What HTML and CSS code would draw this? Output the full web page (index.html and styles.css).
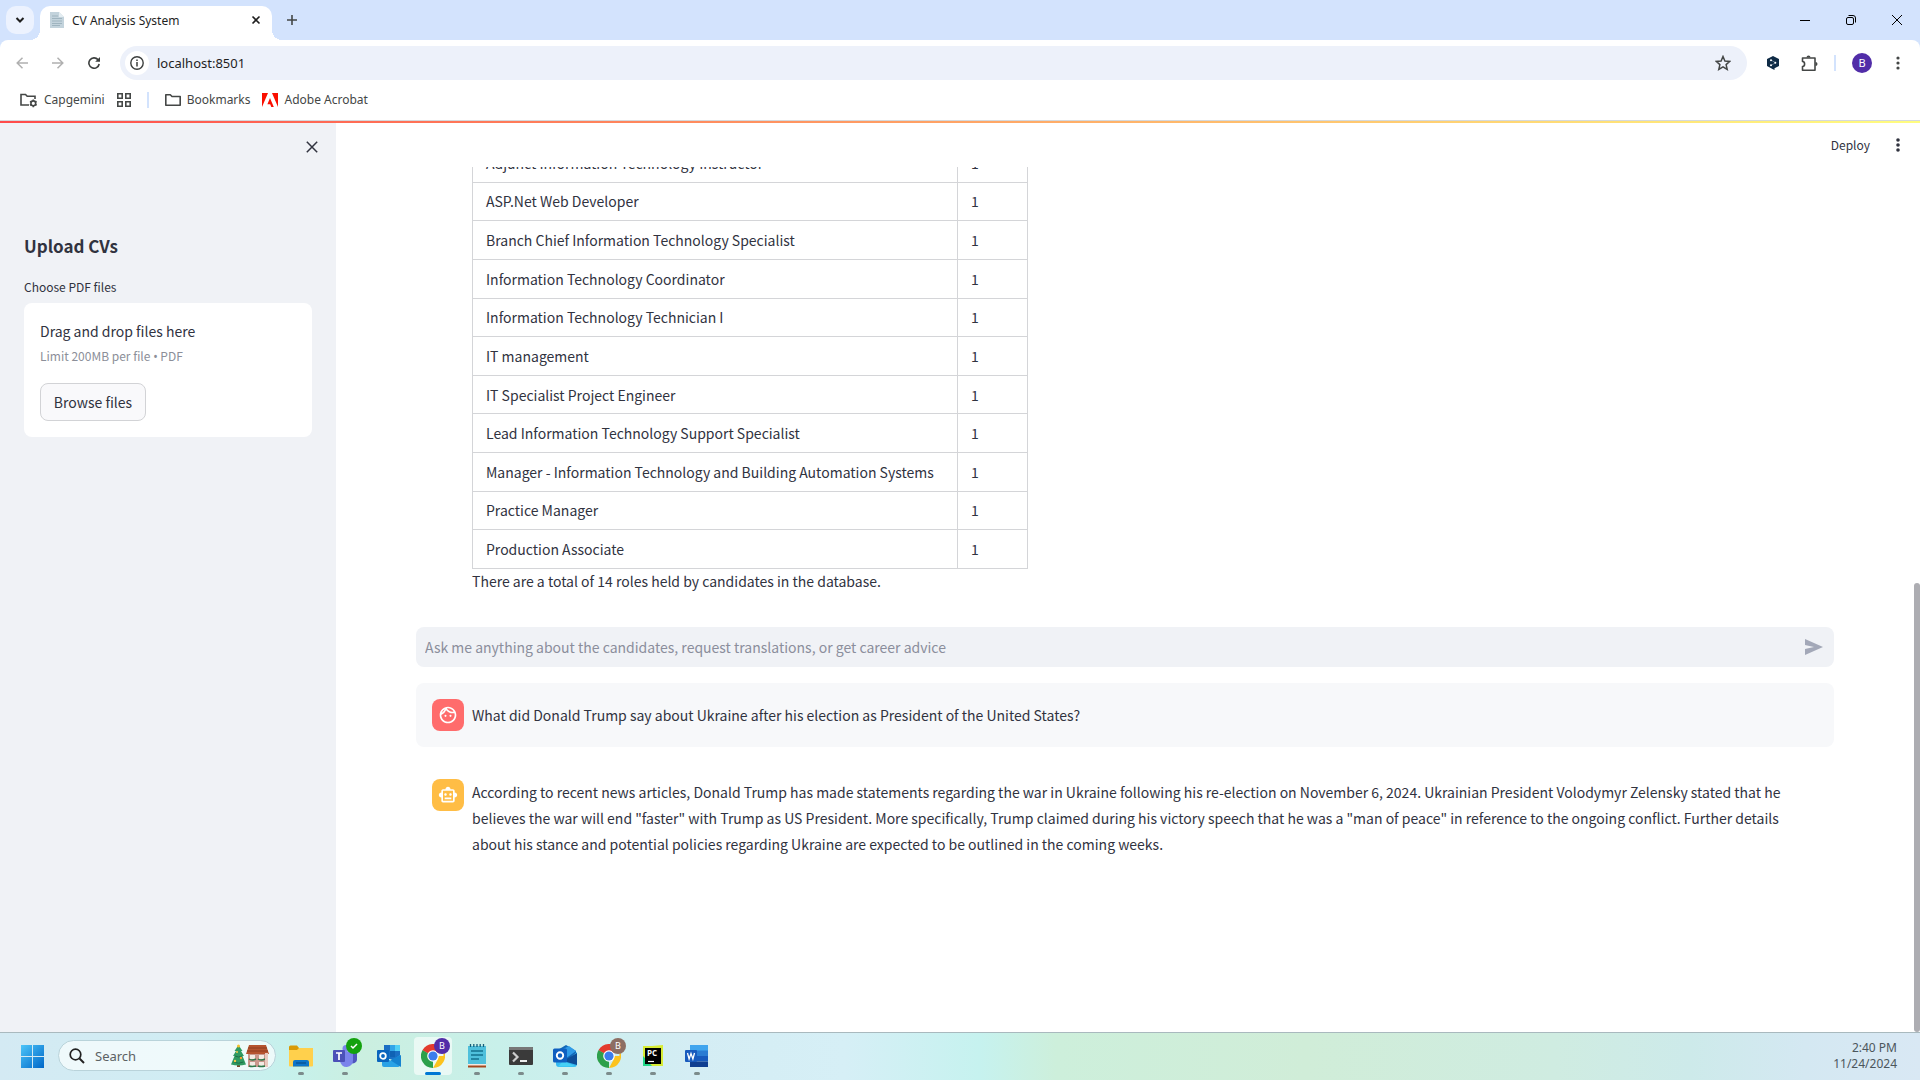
FILE: index.html
```html
<!DOCTYPE html>
<html lang="en">
<head>
<meta charset="utf-8">
<title>CV Analysis System</title>
<link rel="stylesheet" href="styles.css">
</head>
<body>
<header class="browser">
  <div class="tabstrip">
    <button class="tab-search" aria-label="Search tabs"><svg width="10" height="10" viewBox="0 0 10 10"><path d="M1.500 3l3.500 3.500L8.500 3" fill="none" stroke="#1f1f1f" stroke-width="2"/></svg></button>
    <div class="tab">
      <svg width="14" height="16" viewBox="0 0 14 16"><path d="M0 0h9l5 5v11H0z" fill="#c3d3dc"/><path d="M9 0l5 5H9z" fill="#e4edf2"/><path d="M2 4h6M2 6.500h10M2 9h10M2 11.500h10M2 13.500h8" stroke="#9fb4bf"/></svg>
      <span class="tab-title">CV Analysis System</span>
      <button class="plain" aria-label="Close tab"><svg width="10" height="10" viewBox="0 0 10 10"><path d="M1.500 1.500l7 7m0-7l-7 7" stroke="#1f1f1f" stroke-width="1.600"/></svg></button>
    </div>
    <button class="plain new-tab" aria-label="New tab"><svg width="12" height="12" viewBox="0 0 12 12"><path d="M6 1v10M1 6h10" stroke="#444746" stroke-width="1.600"/></svg></button>
    <div class="window-buttons">
      <button class="plain" aria-label="Minimize"><svg width="10" height="10" viewBox="0 0 10 10"><path d="M0 5.500h10" stroke="#000"/></svg></button>
      <button class="plain" aria-label="Restore"><svg width="10" height="10" viewBox="0 0 10 10"><rect x=".5" y="2.500" width="7" height="7" rx="1.500" fill="none" stroke="#000"/><path d="M2.500.5H7q2.500 0 2.500 2.500v4.500" fill="none" stroke="#000"/></svg></button>
      <button class="plain" aria-label="Close"><svg width="10" height="10" viewBox="0 0 10 10"><path d="M0 0l10 10M10 0L0 10" stroke="#000"/></svg></button>
    </div>
  </div>
  <div class="toolbar">
    <button class="plain" aria-label="Back"><svg width="12" height="12" viewBox="0 0 12 12"><path d="M12 6H1M6.500.8L1.200 6l5.300 5.200" fill="none" stroke="#b0b0b0" stroke-width="1.500"/></svg></button>
    <button class="plain" aria-label="Forward"><svg width="12" height="12" viewBox="0 0 12 12"><path d="M0 6h11M5.500.8L10.800 6l-5.300 5.200" fill="none" stroke="#b0b0b0" stroke-width="1.500"/></svg></button>
    <button class="plain" aria-label="Reload"><svg width="12" height="12" viewBox="0 0 12 12"><path d="M11.200 7A5.200 5.200 0 1 1 10 2.600L11 3.800" fill="none" stroke="#3c3f3e" stroke-width="1.600"/><path d="M12 0v4.800H7.200z" fill="#3c3f3e"/></svg></button>
    <div class="omnibox">
      <button class="site-info" aria-label="Site information"><svg width="14" height="14" viewBox="0 0 14 14"><circle cx="7" cy="7" r="6.200" fill="none" stroke="#3c3f3e" stroke-width="1.400"/><path d="M7 6v4.500M7 3.500V5" stroke="#3c3f3e" stroke-width="1.500"/></svg></button>
      <input class="url" aria-label="Address" value="localhost:8501">
      <button class="plain" aria-label="Bookmark this page"><svg width="16" height="16" viewBox="0 0 16 16"><path d="M8 1.500l1.900 4.500 4.900.4-3.700 3.200 1.100 4.800L8 11.800l-4.200 2.600 1.100-4.800L1.200 6.400 6.100 6z" fill="none" stroke="#444746" stroke-width="1.500"/></svg></button>
    </div>
    <div class="extensions">
      <button class="plain extension" aria-label="Extension"><svg width="12" height="14" viewBox="0 0 12 14"><path d="M6 0l6 3v7l-4.500 2.300V14L5.500 13 0 10V3z" fill="#0f2b46"/><path d="M4 4l4.500 2.700L4 9.500" fill="none" stroke="#8fa4b8" stroke-width=".6"/><circle cx="4" cy="4.200" r="1" fill="#fff"/><circle cx="8.300" cy="6.700" r="1" fill="#fff"/><circle cx="4" cy="9.300" r="1" fill="#fff"/></svg></button>
      <button class="plain" aria-label="Extensions"><svg width="17" height="17" viewBox="0 0 17 17"><path d="M1.500 3H14v12.200H1.500V11.500c2.800 0 2.800-5 0-5z" fill="none" stroke="#444746" stroke-width="1.600" stroke-linejoin="round"/><path d="M5.500 2.500a2 2 0 0 1 4 0zM14.500 7a2 2 0 0 1 0 4z" fill="#444746"/></svg></button>
      <span class="divider"></span>
      <button class="profile" aria-label="Profile">B</button>
    </div>
    <button class="plain" aria-label="Browser menu"><svg width="4" height="14" viewBox="0 0 4 14" fill="#444746"><circle cx="2" cy="2" r="1.600"/><circle cx="2" cy="7" r="1.600"/><circle cx="2" cy="12" r="1.600"/></svg></button>
  </div>
  <nav class="bookmarks">
    <a href="#"><svg width="18" height="15" viewBox="0 0 18 15" fill="none" stroke="#444746" stroke-width="1.600"><path d="M9 12H1V1.500h4.500L7.200 3.300H15V6"/><circle cx="13.300" cy="10.300" r="2.400"/><path d="M13.300 6.500v1.300M13.300 12.800v1.400M10 8.400l1.200.7M15.400 11.500l1.200.7M10 12.200l1.200-.7M15.400 9.100l1.200-.7"/></svg>Capgemini</a>
    <button class="plain" aria-label="Tab groups"><svg width="14" height="14" viewBox="0 0 14 14" fill="none" stroke="#444746" stroke-width="1.600"><path d="M.8.8h4.400v4.400H.8zM8.800.8h4.400v4.400H8.800zM.8 8.800h4.400v4.400H.8zM8.800 8.800h4.400v4.400H8.800z"/></svg></button>
    <span class="divider"></span>
    <a href="#"><svg width="16" height="12" viewBox="0 0 16 12" fill="none" stroke="#444746" stroke-width="1.600"><path d="M.8.8h4.500l1.700 1.700h8.200v8.700H.8z" stroke-linejoin="round"/></svg>Bookmarks</a>
    <a href="#"><svg width="16" height="14" viewBox="0 0 16 14" fill="#fa0f00"><path d="M0 0h6L0 14zM16 0h-6l6 14zM8 5l3.800 9H9.300l-1.100-2.800H5.400z"/></svg>Adobe Acrobat</a>
  </nav>
</header>

<div class="app">
  <div class="rainbow"></div>
  <aside class="sidebar">
    <button class="plain close-sidebar" aria-label="Close sidebar"><svg width="12" height="12" viewBox="0 0 12 12"><path d="M.8.8l10.400 10.400M11.200.8L.8 11.200" stroke="#31333f" stroke-width="1.500"/></svg></button>
    <h2>Upload CVs</h2>
    <p class="upload-label" id="upload-label">Choose PDF files</p>
    <section class="dropzone" aria-labelledby="upload-label">
      <p class="drop-title">Drag and drop files here</p>
      <p class="drop-limit">Limit 200MB per file <span class="dot">•</span> PDF</p>
      <button class="browse">Browse files</button>
    </section>
  </aside>
  <main class="main">
    <div class="app-header">
      <button class="plain deploy">Deploy</button>
      <button class="plain" aria-label="App menu"><svg width="4" height="14" viewBox="0 0 4 14" fill="#31333f"><circle cx="2" cy="2" r="1.800"/><circle cx="2" cy="7" r="1.800"/><circle cx="2" cy="12" r="1.800"/></svg></button>
    </div>
    <div class="content">
      <div class="answer">
        <table class="roles">
          <tbody>
            <tr><td>Adjunct Information Technology Instructor</td><td>1</td></tr>
            <tr><td>ASP.Net Web Developer</td><td>1</td></tr>
            <tr><td>Branch Chief Information Technology Specialist</td><td>1</td></tr>
            <tr><td>Information Technology Coordinator</td><td>1</td></tr>
            <tr><td>Information Technology Technician I</td><td>1</td></tr>
            <tr><td>IT management</td><td>1</td></tr>
            <tr><td>IT Specialist Project Engineer</td><td>1</td></tr>
            <tr><td>Lead Information Technology Support Specialist</td><td>1</td></tr>
            <tr><td>Manager - Information Technology and Building Automation Systems</td><td>1</td></tr>
            <tr><td>Practice Manager</td><td>1</td></tr>
            <tr><td>Production Associate</td><td>1</td></tr>
          </tbody>
        </table>
        <p>There are a total of 14 roles held by candidates in the database.</p>
      </div>
      <form class="chat-input">
        <input aria-label="Chat message" placeholder="Ask me anything about the candidates, request translations, or get career advice">
        <button type="button" class="plain" aria-label="Send"><svg width="18" height="16" viewBox="0 0 18 16"><path d="M0 0l18 8L0 16V10l9-2-9-2z" fill="#a3a8b8"/></svg></button>
      </form>
      <article class="message user">
        <span class="avatar face"><svg width="20" height="20" viewBox="0 0 24 24" fill="#fff"><path d="M10.250 13a1.250 1.250 0 1 1-2.500 0 1.250 1.250 0 0 1 2.500 0zM15 11.750a1.250 1.250 0 1 0 0 2.500 1.250 1.250 0 0 0 0-2.500zM22 12c0 5.520-4.480 10-10 10S2 17.520 2 12 6.480 2 12 2s10 4.480 10 10zM10.660 4.120C12.060 6.440 14.600 8 17.500 8c.46 0 .91-.05 1.340-.12C17.440 5.560 14.900 4 12 4c-.46 0-.91.050-1.340.120zM4.420 9.470a8.046 8.046 0 0 0 3.660-4.440 8.046 8.046 0 0 0-3.660 4.440zM20 12c0-.78-.12-1.530-.33-2.240-.7.150-1.420.240-2.170.240a9.974 9.974 0 0 1-7.760-3.690A10.016 10.016 0 0 1 4 11.860c.01.040 0 .090 0 .140 0 4.410 3.590 8 8 8s8-3.590 8-8z"/></svg></span>
        <p>What did Donald Trump say about Ukraine after his election as President of the United States?</p>
      </article>
      <article class="message reply">
        <span class="avatar bot"><svg width="20" height="20" viewBox="0 0 24 24" fill="#fff"><path d="M20 9V7c0-1.100-.9-2-2-2h-3c0-1.660-1.340-3-3-3S9 3.340 9 5H6c-1.100 0-2 .9-2 2v2c-1.660 0-3 1.340-3 3s1.340 3 3 3v4c0 1.100.9 2 2 2h12c1.100 0 2-.9 2-2v-4c1.660 0 3-1.340 3-3s-1.340-3-3-3zm-2 10H6V7h12v12zm-9-6c-.83 0-1.500-.67-1.500-1.500S8.170 10 9 10s1.500.67 1.500 1.500S9.830 13 9 13zm7.500-1.500c0 .83-.67 1.500-1.500 1.500s-1.500-.67-1.500-1.500.67-1.500 1.500-1.500 1.500.67 1.500 1.500zM8 15h8v2H8z"/></svg></span>
        <p>According to recent news articles, Donald Trump has made statements regarding the war in Ukraine following his re-election on November 6, 2024. Ukrainian President Volodymyr Zelensky stated that he believes the war will end "faster" with Trump as US President. More specifically, Trump claimed during his victory speech that he was a "man of peace" in reference to the ongoing conflict. Further details about his stance and potential policies regarding Ukraine are expected to be outlined in the coming weeks.</p>
      </article>
    </div>
    <div class="scroll-thumb"></div>
  </main>
</div>

<footer class="taskbar">
  <button class="task start" aria-label="Start"><svg width="24" height="24" viewBox="0 0 24 24"><defs><linearGradient id="win" x1="0" y1="0" x2="24" y2="24" gradientUnits="userSpaceOnUse"><stop stop-color="#4fc9fb"/><stop offset="1" stop-color="#0067c8"/></linearGradient></defs><path d="M1 1h11v11H1zM13 1h11v11H13zM1 13h11v11H1zM13 13h11v11H13z" fill="url(#win)"/></svg></button>
  <label class="search">
    <svg width="16" height="16" viewBox="0 0 16 16"><circle cx="6.500" cy="6.500" r="5.300" fill="none" stroke="#222" stroke-width="1.700"/><path d="M10.500 10.500L15 15" stroke="#222" stroke-width="2"/></svg>
    <input placeholder="Search" aria-label="Search">
    <svg width="38" height="24" viewBox="0 0 38 24"><path d="M6 18h3v5H6z" fill="#7b4a2a"/><path d="M7.500 1l4 6h-1.500l3 5h-1.500l3.500 8.500q-7.500 2-15 0L3.500 12H2l3-5H3.500z" fill="#2f9a62"/><path d="M4 12q3.500 2 7 0M2.500 18q5 2.500 10 0" stroke="#1c7048" fill="none"/><circle cx="7.500" cy="2" r="1.500" fill="#f6c12f"/><circle cx="6" cy="8" r="1" fill="#f7c948"/><circle cx="10" cy="14" r="1.200" fill="#f0a030"/><circle cx="4" cy="17" r="1.200" fill="#f7c948"/><path d="M17 8h19v15H17z" fill="#c9978c"/><path d="M18 1h17l3 9H15z" fill="#b5532f"/><path d="M17 4h19M16 7h21" stroke="#8e3c20"/><path d="M19 11h5v4h-5zM28 11h5v4h-5zM19 18h5v4h-5zM28 18h5v4h-5z" fill="#f2ebe4"/><path d="M18 15q3 2 7 0M27 15q3 2 7 0M18 22q3 1 7 0M27 22q3 1 7 0" stroke="#2c7a4b" stroke-width="1.500" fill="none"/><path d="M34 9h3v14h-3z" fill="#e8c9c0"/></svg>
  </label>
  <button class="task" aria-label="File Explorer"><svg width="24" height="24" viewBox="0 0 24 24"><path d="M0 3q0-1.500 1.500-1.500H8L10 4v4H0z" fill="#d99a05"/><path d="M0 6h8l2-2h14v17.500q0 1-1 1H1q-1 0-1-1z" fill="#ffd04c"/><path d="M4 22.500V18q0-2 2-2h12q2 0 2 2v4.500z" fill="#0f75c8"/><path d="M7 19h10" stroke="#0a4d8c" stroke-width="1.200"/></svg><i></i></button>
  <button class="task" aria-label="Teams"><svg width="24" height="24" viewBox="0 0 24 24"><circle cx="13" cy="4.500" r="3.500" fill="#7b83eb"/><path d="M17 8h7v7a4 4 0 0 1-7 3z" fill="#4f55be"/><path d="M7 8h13v8a6.500 6.500 0 0 1-13 1z" fill="#7b83eb"/><rect y="6" width="12" height="12" rx="1" fill="#4b50b8"/><path d="M3 9h6M6 9v7" stroke="#fff" stroke-width="1.700"/></svg><b class="badge ok"><svg width="8" height="8" viewBox="0 0 8 8"><path d="M1 4l2 2 4-4" fill="none" stroke="#fff" stroke-width="1.500"/></svg></b><i></i></button>
  <button class="task" aria-label="Outlook classic"><svg width="24" height="24" viewBox="0 0 24 24"><path d="M7 1h16v14H7z" fill="#1a6fc4"/><path d="M13 1h5v6h-5z" fill="#31a5e8"/><path d="M18 1h5v6h-5z" fill="#50d0f5"/><path d="M13 7h5v6h-5z" fill="#0f62b4"/><path d="M5 12l9 5 9-6v10q0 2-2 2H7q-2 0-2-2z" fill="#2aa2e6"/><path d="M24 11v12L13 16z" fill="#1683d0"/><rect y="6" width="12" height="12" rx="1" fill="#0a64bd"/><circle cx="6" cy="12" r="2.800" fill="none" stroke="#fff" stroke-width="1.800"/></svg></button>
  <button class="task active" aria-label="Chrome"><svg width="24" height="24" viewBox="0 0 24 24"><path d="M12 12L1.600 6A12 12 0 0 1 22.400 6z" fill="#e33b2e"/><path d="M12 12L1.600 6A12 12 0 0 0 12 24z" fill="#2da04b"/><path d="M12 12h10.400V6A12 12 0 0 1 12 24l5-9z" fill="#fcc31e"/><path d="M1.600 6h20.800L12 12z" fill="#e33b2e"/><circle cx="12" cy="12" r="5.800" fill="#fff"/><circle cx="12" cy="12" r="4.600" fill="#3b7ded"/></svg><b class="badge purple">B</b><i></i></button>
  <button class="task" aria-label="Notepad"><svg width="24" height="24" viewBox="0 0 24 24"><path d="M3 19h18v4.500H3z" fill="#a5481f"/><path d="M3 20h18v1.500H3z" fill="#f4e9e0"/><path d="M3 2h18v18H3z" fill="#4fc0dc"/><path d="M6 7h12M6 11h12M6 15h8" stroke="#14718f" stroke-width="1.400"/><path d="M5.500 0v3M8.800 0v3M12 0v3M15.200 0v3M18.500 0v3" stroke="#155e7a" stroke-width="1.300"/></svg><i></i></button>
  <button class="task" aria-label="Terminal"><svg width="24" height="24" viewBox="0 0 24 24"><rect y="3" width="24" height="18" rx="1" fill="#3a3a3a"/><path d="M0 6V4q0-1 1-1h22q1 0 1 1v2z" fill="#777"/><path d="M4 8.500L8.500 13 4 17.500" fill="none" stroke="#ccc" stroke-width="2.200"/><path d="M11 17h7" stroke="#fff" stroke-width="1.800"/></svg><i></i></button>
  <button class="task" aria-label="Outlook"><svg width="24" height="24" viewBox="0 0 24 24"><path d="M3 7l10-6 10 6v9H3z" fill="#1268b8"/><path d="M8 6l8-4 7 5-11 8z" fill="#2f9be8"/><path d="M3 14l10 3 11-9v12q0 3-3 3H6q-3 0-3-3z" fill="#35b8f1"/><path d="M24 9v12L10 17z" fill="#0d4d97"/><path d="M10 17l13 5.500H5z" fill="#45d0f5"/><rect y="4.500" width="14" height="14" rx="1.500" fill="#0f5fc0"/><circle cx="7" cy="11.500" r="3.200" fill="none" stroke="#fff" stroke-width="1.900"/></svg><i></i></button>
  <button class="task" aria-label="Chrome second profile"><svg width="24" height="24" viewBox="0 0 24 24"><path d="M12 12L1.600 6A12 12 0 0 1 22.400 6z" fill="#e33b2e"/><path d="M12 12L1.600 6A12 12 0 0 0 12 24z" fill="#2da04b"/><path d="M12 12h10.400V6A12 12 0 0 1 12 24l5-9z" fill="#fcc31e"/><path d="M1.600 6h20.800L12 12z" fill="#e33b2e"/><circle cx="12" cy="12" r="5.800" fill="#fff"/><circle cx="12" cy="12" r="4.600" fill="#3b7ded"/></svg><b class="badge brown">B</b><i></i></button>
  <button class="task" aria-label="PyCharm"><svg width="24" height="24" viewBox="0 0 24 24"><path d="M2 2h9l11-1v21H2z" fill="#d8ec35"/><path d="M2 12v10h9z" fill="#21d789"/><path d="M4 4h16v16H4z" fill="#000"/><path d="M7 17.500h6" stroke="#fff" stroke-width="1.200"/><text x="6" y="12" font-family="Open Sans, sans-serif" font-size="8" font-weight="700" fill="#fff">PC</text></svg><i></i></button>
  <button class="task" aria-label="Word"><svg width="24" height="24" viewBox="0 0 24 24"><path d="M5 1h18v6H5z" fill="#41a5ee"/><path d="M5 6.500h18V12H5z" fill="#2b7cd3"/><path d="M5 12h18v5.500H5z" fill="#185abd"/><path d="M5 17.500h18V23H5z" fill="#103f91"/><rect y="6" width="12" height="12" rx="1" fill="#185abd"/><path d="M2.500 9l1.600 6L6 9.500 7.900 15l1.600-6" fill="none" stroke="#fff" stroke-width="1.300"/></svg><i></i></button>
  <div class="clock"><span>2:40 PM</span><span>11/24/2024</span></div>
</footer>
</body>
</html>
```
FILE: styles.css
```css
* { box-sizing: border-box; }
body {
  margin: 0;
  height: 100vh;
  overflow: hidden;
  display: flex;
  flex-direction: column;
  background: #fff;
  color: #31333f;
  font-family: "Noto Sans CJK SC", sans-serif;
  font-size: 14px;
  line-height: 26px;
}
p, h2 { margin: 0; }
button, input { font: inherit; color: inherit; }
button {
  display: flex;
  align-items: center;
  justify-content: center;
  border: 0;
  padding: 0;
}
.plain { background: none; }
svg { display: block; flex: none; }
a { color: inherit; text-decoration: none; }
input { border: 0; outline: 0; background: none; padding: 0; min-width: 0; }

/* Browser frame */
.browser {
  background: #d3e3fd;
  border-bottom: 1px solid #d5d9dd;
  font-family: "Noto Sans", sans-serif;
  font-size: 12px;
  line-height: 16px;
  color: #1f1f1f;
}
.tabstrip { display: flex; height: 40px; padding: 6px 18px 0 6px; }
.tab-search { width: 28px; height: 28px; border-radius: 10px; background: #ecf2fe; }
.tab {
  position: relative;
  display: flex;
  align-items: center;
  gap: 8px;
  width: 232px;
  height: 34px;
  margin-left: 6px;
  padding: 0 11px 6px 10px;
  border-radius: 10px 10px 0 0;
  background: #fff;
}
.tab::before, .tab::after {
  content: "";
  position: absolute;
  bottom: 0;
  width: 10px;
  height: 10px;
}
.tab::before { left: -10px; background: radial-gradient(circle at 0 0, transparent 10px, #fff 10px); }
.tab::after { right: -10px; background: radial-gradient(circle at 100% 0, transparent 10px, #fff 10px); }
.tab-title { flex: 1; padding-top: 2px; }
.new-tab { width: 28px; height: 28px; margin-left: 6px; }
.window-buttons { display: flex; gap: 36px; margin-left: auto; align-items: center; height: 28px; }
.toolbar {
  display: flex;
  align-items: center;
  height: 46px;
  padding: 6px 20px 6px 16px;
  border-radius: 8px 8px 0 0;
  background: #fff;
  gap: 24px;
}
.omnibox {
  flex: 1;
  display: flex;
  align-items: center;
  height: 34px;
  margin: 0 -10px 0 -4px;
  padding: 0 16px 0 5px;
  border-radius: 17px;
  background: #edf1fa;
  gap: 8px;
}
.site-info { width: 24px; height: 24px; border-radius: 50%; background: #fff; }
.url { flex: 1; font-size: 13px; height: 20px; }
.extensions { display: flex; align-items: center; gap: 16px; }
.extension { width: 24px; }
.divider { width: 2px; height: 16px; background: #d3e3fd; }
.profile {
  width: 20px;
  height: 20px;
  border-radius: 50%;
  background: #512da8;
  color: #fff;
  font-size: 11px;
}
.bookmarks {
  display: flex;
  align-items: center;
  gap: 16px;
  height: 34px;
  padding: 0 20px 6px;
  background: #fff;
  color: #444746;
}
.bookmarks a { display: flex; align-items: center; gap: 6px; margin-right: -4px; }

/* App shell */
.app { position: relative; flex: 1; min-height: 0; display: flex; }
.rainbow {
  position: absolute;
  z-index: 1;
  inset: 0 0 auto;
  height: 2px;
  background: linear-gradient(90deg, #ff4b4b, #fffd80);
}
.sidebar { width: 336px; padding: 18px 24px; background: #f0f2f6; }
.close-sidebar { width: 12px; height: 16px; margin: 0 -6px 0 auto; }
.sidebar h2 { margin-top: 79px; font-size: 17px; line-height: 24px; font-weight: 600; }
.upload-label { margin-top: 19px; font-size: 12px; line-height: 20px; }
.dropzone { margin-top: 6px; padding: 15px 16px 16px; border-radius: 8px; background: #fff; }
.drop-limit { font-size: 12px; line-height: 24px; color: #8c8f99; }
.dot { font-family: "Noto Sans", sans-serif; }
.browse {
  width: 106px;
  height: 38px;
  margin-top: 14px;
  border: 1px solid #d2d3d6;
  border-radius: 8px;
  background: #f9f9fb;
}

/* Conversation */
.main { position: relative; flex: 1; min-width: 0; display: flex; flex-direction: column; }
.app-header {
  display: flex;
  align-items: center;
  justify-content: flex-end;
  gap: 26px;
  height: 46px;
  padding: 2px 20px 0 0;
}
.deploy { font-size: 12px; }
.content { flex: 1; min-height: 0; overflow: hidden; padding: 0 86px 0 80px; }
.answer { padding-left: 56px; }
.roles { border-collapse: collapse; height: 426px; margin-top: -24px; }
.roles td { padding: 0 13px; border: 1px solid #d4d5d8; }
.roles td:first-child { width: 485px; }
.roles td:last-child { width: 70px; }
.answer p { line-height: 24px; }
.chat-input {
  display: flex;
  height: 40px;
  margin-top: 34px;
  padding: 0 11px 0 9px;
  border-radius: 8px;
  background: #f0f2f6;
}
.chat-input input { flex: 1; }
.chat-input input::placeholder { color: #8b8e9c; opacity: 1; }
.message { display: flex; gap: 8px; margin-top: 16px; padding: 16px; border-radius: 8px; }
.user { align-items: center; background: #f7f8fa; }
.avatar {
  flex: none;
  display: flex;
  align-items: center;
  justify-content: center;
  width: 32px;
  height: 32px;
  border-radius: 8px;
}
.face { background: #ff6c6c; }
.bot { background: #ffbd45; }
.scroll-thumb {
  position: absolute;
  right: 0;
  bottom: 0;
  width: 6px;
  height: 449px;
  border-radius: 3px;
  background: #adadb2;
}

/* Taskbar */
.taskbar {
  display: flex;
  align-items: center;
  height: 48px;
  padding: 0 23px 2px 10px;
  border-top: 1px solid #a9b9be;
  background: linear-gradient(90deg, #d4eaf3 0%, #d0edf3 10%, #c6f1ec 15%, #cbefe0 19%, #c8f0ea 26%, #d4edf4 36%, #d6eff6 44%, #c6f2ef 51%, #cdefdb 55%, #d0edd8 68%, #cfece1 81%, #cdeaea 88%, #d4e8f2 94%, #d9e8f4 100%);
  font-family: "Noto Sans", sans-serif;
}
.task {
  position: relative;
  width: 38px;
  height: 38px;
  margin: 0 3px;
  border-radius: 4px;
  background: none;
}
.start { width: 44px; margin: 0; }
.active { background: #ffffff99; }
.task i {
  position: absolute;
  bottom: 0;
  left: 16px;
  width: 6px;
  height: 3px;
  border-radius: 2px;
  background: #7c8b8b;
}
.active i { left: 11px; width: 16px; background: #0078d4; }
.badge {
  position: absolute;
  top: 1px;
  right: 2px;
  display: flex;
  align-items: center;
  justify-content: center;
  width: 16px;
  height: 16px;
  border-radius: 50%;
  color: #fff;
  font-size: 9px;
  font-weight: 400;
}
.ok { background: #13a10e; }
.purple { background: #512da8; }
.brown { background: #8d6e63; }
.search {
  display: flex;
  align-items: center;
  gap: 10px;
  width: 218px;
  height: 31px;
  margin: 0 3px 0 4px;
  padding: 0 6px 0 10px;
  border: 1px solid #b9d3da;
  border-radius: 16px;
  background: #f6fcfdcc;
}
.search input { flex: 1; font-size: 13px; }
.search input::placeholder { color: #5c6164; opacity: 1; }
.clock {
  display: flex;
  flex-direction: column;
  align-items: flex-end;
  margin-left: auto;
  font-size: 12px;
  line-height: 16px;
  color: #4c565c;
}
```
